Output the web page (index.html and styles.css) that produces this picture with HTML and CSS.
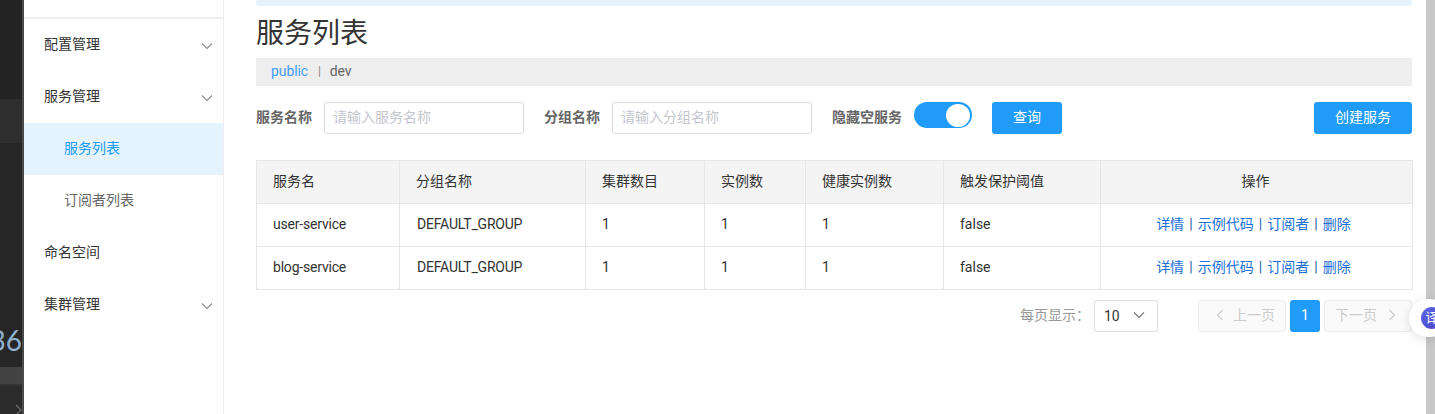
FILE: index.html
```html
<!DOCTYPE html>
<html lang="zh-CN">
<head>
<meta charset="utf-8">
<title>服务列表</title>
<link rel="stylesheet" href="styles.css">
</head>
<body>
<div class="app">
  <div class="backdrop">
    <div class="bd-top"></div>
    <div class="bd-band"></div>
    <div class="bd-mid"><span class="bd-num">36</span></div>
    <div class="bd-bar"></div>
    <div class="bd-low"><svg class="bd-chev" viewBox="0 0 7 12"><path d="M1 1 6 6 1 11"/></svg></div>
  </div>
  <aside class="sidebar">
    <div class="side-head"></div>
    <nav class="menu">
      <div class="menu-item"><span>配置管理</span><svg class="chev" viewBox="0 0 12 8"><path d="M1 1.5 6 6.5 11 1.5"/></svg></div>
      <div class="menu-item"><span>服务管理</span><svg class="chev" viewBox="0 0 12 8"><path d="M1 1.5 6 6.5 11 1.5"/></svg></div>
      <div class="menu-item sub active"><span>服务列表</span></div>
      <div class="menu-item sub"><span>订阅者列表</span></div>
      <div class="menu-item"><span>命名空间</span></div>
      <div class="menu-item"><span>集群管理</span><svg class="chev" viewBox="0 0 12 8"><path d="M1 1.5 6 6.5 11 1.5"/></svg></div>
    </nav>
  </aside>
  <main class="main">
    <div class="banner"></div>
    <h1 class="title">服务列表</h1>
    <div class="crumbs"><a class="ns-on">public</a><span class="ns-sep">|</span><span class="ns">dev</span></div>
    <form class="filters">
      <label class="f-label">服务名称</label>
      <div class="input w200">请输入服务名称</div>
      <label class="f-label gap-l">分组名称</label>
      <div class="input w200">请输入分组名称</div>
      <label class="f-label gap-l">隐藏空服务</label>
      <div class="switch"><span class="knob"></span></div>
      <button type="button" class="btn query">查询</button>
      <button type="button" class="btn create">创建服务</button>
    </form>
    <table class="grid">
      <colgroup>
        <col class="c1"><col class="c2"><col class="c3"><col class="c4"><col class="c5"><col class="c6"><col class="c7">
      </colgroup>
      <thead>
        <tr><th>服务名</th><th>分组名称</th><th>集群数目</th><th>实例数</th><th>健康实例数</th><th>触发保护阈值</th><th class="center">操作</th></tr>
      </thead>
      <tbody>
        <tr><td class="lat">user-service</td><td class="lat grp">DEFAULT_GROUP</td><td>1</td><td>1</td><td>1</td><td>false</td>
          <td class="center ops"><a>详情</a> | <a>示例代码</a> | <a>订阅者</a> | <a>删除</a></td></tr>
        <tr><td class="lat">blog-service</td><td class="lat grp">DEFAULT_GROUP</td><td>1</td><td>1</td><td>1</td><td>false</td>
          <td class="center ops"><a>详情</a> | <a>示例代码</a> | <a>订阅者</a> | <a>删除</a></td></tr>
      </tbody>
    </table>
    <div class="pager">
      <span class="pg-label">每页显示：</span>
      <div class="pg-size"><span>10</span><svg class="chev dark" viewBox="0 0 12 8"><path d="M1 1.5 6 6.5 11 1.5"/></svg></div>
      <div class="pg-btn prev"><svg class="arrow" viewBox="0 0 8 12"><path d="M6.5 1 1.5 6 6.5 11"/></svg><span>上一页</span></div>
      <div class="pg-cur">1</div>
      <div class="pg-btn next"><span>下一页</span><svg class="arrow" viewBox="0 0 8 12"><path d="M1.5 1 6.5 6 1.5 11"/></svg></div>
    </div>
  </main>
  <div class="scrollbar"></div>
  <div class="float"><div class="float-icon">译</div></div>
</div>
</body>
</html>
```
FILE: styles.css
```css
* { box-sizing: border-box; }
html, body { margin: 0; height: 100%; overflow: hidden; background: #fff; }
body { font-family: Roboto, "Noto Sans CJK SC", sans-serif; font-size: 14px; color: #333; }
.app { display: flex; height: 414px; position: relative; overflow: hidden; }

.backdrop { width: 24px; flex: none; display: flex; flex-direction: column; background: #262626; border-right: 2px solid #4a4a4a; overflow: hidden; }
.bd-top { height: 99px; background: #242424; }
.bd-band { height: 44px; background: #2e2e2e; }
.bd-mid { height: 224px; background: #262626; position: relative; }
.bd-num { font: 28px/1 "Lato", sans-serif; color: #8fb1d0; position: absolute; right: 0; top: 183px; }
.bd-bar { height: 17px; background: #434343; }
.bd-low { flex: 1; background: #2b2b2b; border-top: 2px solid #333; position: relative; }
.bd-chev { position: absolute; right: 0; bottom: -2px; width: 7px; height: 12px; fill: none; stroke: #666; stroke-width: 1.4; }

.sidebar { width: 200px; flex: none; border-right: 1px solid #eee; background: #fff; }
.side-head { height: 19px; border-bottom: 2px solid #eee; }
.menu { display: flex; flex-direction: column; }
.menu-item { height: 52px; display: flex; align-items: center; justify-content: space-between; padding: 0 10px 4px 20px; color: #333; }
.menu-item.sub { padding-left: 40px; color: #666; }
.menu-item.active { background: #e4f3fe; color: #209bfa; }
.chev { width: 12px; height: 8px; fill: none; stroke: #8a8a8a; stroke-width: 1.1; margin-top: 6px; }

.main { flex: 1; min-width: 0; padding: 0 14px 0 32px; }
.banner { height: 6px; background: #e4f3fe; border-radius: 0 0 3px 3px; }
.title { margin: 0; height: 52px; padding-top: 9px; font-size: 28px; font-weight: 400; line-height: 38px; color: #333; }
.crumbs { height: 28px; background: #eee; padding: 0 0 2px 15px; display: flex; align-items: center; font-size: 14px; letter-spacing: -0.1px; color: #666; }
.ns-on { color: #409eff; }
.ns-sep { margin: 0 9px 0 10px; font-size: 12px; color: #888; }

.filters { display: flex; align-items: center; height: 32px; margin: 16px 0 26px; }
.f-label { font-weight: 700; color: #666; margin-right: 12px; padding-bottom: 4px; }
.gap-l { margin-left: 20px; }
.input { height: 32px; border: 1px solid #ddd; border-radius: 3px; padding: 0 9px 0 8px; line-height: 28px; color: #c4c6cf; }
.w200 { width: 200px; }
.switch { width: 58px; height: 26px; border-radius: 13px; background: #209bfa; position: relative; align-self: flex-start; }
.knob { position: absolute; right: 2px; top: 2px; width: 24px; height: 23px; border-radius: 50%; background: #fff; }
.btn { height: 32px; border: 0; border-radius: 3px; background: #209bfa; color: #fff; font: inherit; padding: 0 0 4px; }
.query { width: 70px; margin-left: 20px; }
.create { width: 98px; margin-left: auto; }

.grid { width: 1156px; table-layout: fixed; border-collapse: collapse; border: 1px solid #e6e6e6; }
.c1 { width: 143px; } .c2 { width: 186px; } .c3 { width: 119px; } .c4 { width: 101px; }
.c5 { width: 138px; } .c6 { width: 157px; } .c7 { width: 312px; }
.grid th, .grid td { border: 1px solid #e6e6e6; padding: 0 16px 2px; height: 43px; text-align: left; font-weight: 400; color: #333; }
.grid th { background: #f4f4f4; padding-bottom: 4px; }
.grid .lat { letter-spacing: -0.2px; }
.grid .grp { padding-left: 17px; }
.grid th.center { text-align: center; padding-right: 18px; }
.grid td.center { text-align: center; }
.grid td.ops { color: #1c5e9e; word-spacing: 1.6px; padding-right: 22px; padding-bottom: 4px; }
.ops a { color: #1a6fd8; }

.pager { display: flex; align-items: center; height: 32px; margin-top: 10px; }
.pg-label { margin-left: auto; color: #999; margin-right: 4px; padding-bottom: 4px; }
.pg-size { width: 64px; height: 32px; border: 1px solid #ddd; border-radius: 3px; display: flex; align-items: center; justify-content: space-between; padding: 0 12px 0 9px; margin-right: 40px; color: #333; }
.chev.dark { stroke: #777; margin: 0 0 2px; }
.pg-btn { width: 88px; height: 32px; border: 1px solid #eee; border-radius: 3px; background: #fafafa; color: #ccc; display: flex; align-items: center; padding-bottom: 4px; }
.prev { padding-left: 17px; gap: 9px; }
.next { padding-left: 10px; gap: 11px; }
.arrow { width: 8px; height: 12px; fill: none; stroke: #ccc; stroke-width: 1.2; margin-top: 2px; }
.pg-cur { width: 30px; height: 32px; margin: 0 4px; border-radius: 3px; background: #209bfa; color: #fff; display: flex; align-items: center; justify-content: center; padding-bottom: 3px; }

.scrollbar { width: 9px; flex: none; background: #c8c8c8; }
.float { position: absolute; left: 1409px; top: 299px; width: 40px; height: 38px; border-radius: 19px; background: #fff; box-shadow: 0 2px 12px rgba(0,0,0,.12); padding: 8px 0 0 12px; }
.float-icon { position: relative; width: 22px; height: 22px; border-radius: 50%; background: linear-gradient(135deg, #5a68e8, #4a45c8); color: #fff; font-size: 13px; line-height: 21px; text-align: center; }
.float-icon::after { content: ""; position: absolute; left: 9px; bottom: -3px; width: 6px; height: 6px; background: #4a45c8; transform: rotate(45deg); z-index: -1; }
```
